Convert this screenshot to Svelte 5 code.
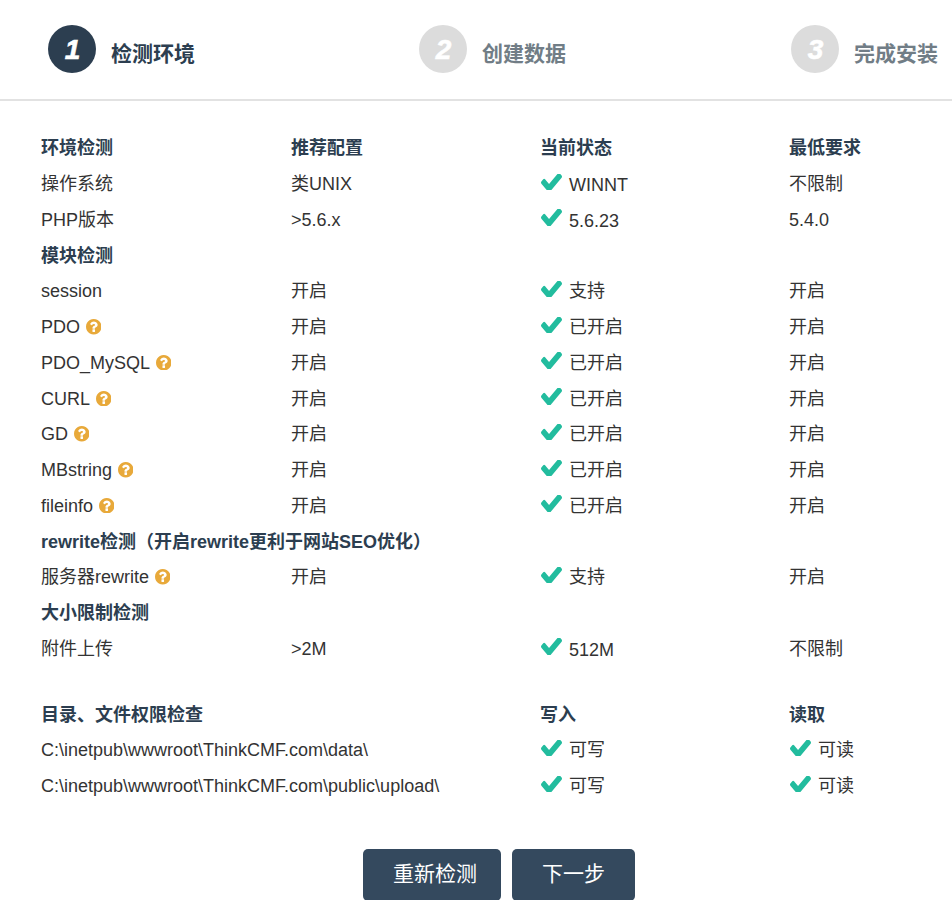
<script>
  const check = "M1671 566q0 40-28 68l-724 724-136 136q-28 28-68 28t-68-28l-136-136-362-362q-28-28-28-68t28-68l136-136q28-28 68-28t68 28l294 295 656-657q28-28 68-28t68 28l136 136q28 28 28 68z";
  const help = "M1024 1376v-192q0-14-9-23t-23-9h-192q-14 0-23 9t-9 23v192q0 14 9 23t23 9h192q14 0 23-9t9-23zm256-672q0-88-55.5-163t-138.5-116-170-41q-243 0-371 213-15 24 8 42l132 100q7 6 19 6 16 0 25-12 53-68 86-92 34-24 86-24 48 0 85.5 26t37.5 59q0 38-20 61t-68 45q-63 28-115.5 86.5t-52.5 125.5v36q0 14 9 23t23 9h192q14 0 23-9t9-23q0-19 21.5-49.5t54.5-49.5q32-18 49-28.5t46-35 44.5-48 28-60.5 12.5-81zm384 192q0 209-103 385.5t-279.5 279.5-385.5 103-385.5-103-279.5-279.5-103-385.5 103-385.5 279.5-279.5 385.5-103 385.5 103 279.5 279.5 103 385.5z";
  const steps = [
    { n: 1, label: "检测环境", active: true },
    { n: 2, label: "创建数据", active: false },
    { n: 3, label: "完成安装", active: false },
  ];
  const mods = [
    ["session", false, "支持"],
    ["PDO", true, "已开启"],
    ["PDO_MySQL", true, "已开启"],
    ["CURL", true, "已开启"],
    ["GD", true, "已开启"],
    ["MBstring", true, "已开启"],
    ["fileinfo", true, "已开启"],
  ];
  const dirs = [
    "C:\\inetpub\\wwwroot\\ThinkCMF.com\\data\\",
    "C:\\inetpub\\wwwroot\\ThinkCMF.com\\public\\upload\\",
  ];
</script>

{#snippet ok(text, low = false)}
  <svg class="check" viewBox="121 398 1550 1020" preserveAspectRatio="none" aria-hidden="true"><path d={check} /></svg><span class:low>{text}</span>
{/snippet}
{#snippet q()}
  <svg class="help" viewBox="128 128 1536 1536" aria-hidden="true"><path d={help} /></svg>
{/snippet}
{#snippet cols()}
  <colgroup><col class="c1" /><col class="c2" /><col class="c2" /><col class="c2" /></colgroup>
{/snippet}

<div class="page">
  <div class="inner">
    <header class="steps">
      {#each steps as s}
        <div class="step" class:active={s.active}>
          <span class="num">{s.n}</span>
          <span class="label">{s.label}</span>
        </div>
      {/each}
    </header>

    <table class="first">
      {@render cols()}
      <tbody>
        <tr class="head"><td>环境检测</td><td>推荐配置</td><td>当前状态</td><td>最低要求</td></tr>
        <tr><td>操作系统</td><td>类UNIX</td><td>{@render ok("WINNT", true)}</td><td>不限制</td></tr>
        <tr><td>PHP版本</td><td>&gt;5.6.x</td><td>{@render ok("5.6.23", true)}</td><td>5.4.0</td></tr>
        <tr class="head"><td colspan="4">模块检测</td></tr>
        {#each mods as m}
          <tr>
            <td>{m[0]}{#if m[1]}{@render q()}{/if}</td>
            <td>开启</td>
            <td>{@render ok(m[2])}</td>
            <td>开启</td>
          </tr>
        {/each}
        <tr class="head"><td colspan="4">rewrite检测（开启rewrite更利于网站SEO优化）</td></tr>
        <tr><td>服务器rewrite{@render q()}</td><td>开启</td><td>{@render ok("支持")}</td><td>开启</td></tr>
        <tr class="head"><td colspan="4">大小限制检测</td></tr>
        <tr><td>附件上传</td><td>&gt;2M</td><td>{@render ok("512M", true)}</td><td>不限制</td></tr>
      </tbody>
    </table>

    <table class="second">
      {@render cols()}
      <tbody>
        <tr class="head"><td colspan="2">目录、文件权限检查</td><td>写入</td><td>读取</td></tr>
        {#each dirs as d}
          <tr>
            <td colspan="2">{d}</td>
            <td>{@render ok("可写")}</td>
            <td>{@render ok("可读")}</td>
          </tr>
        {/each}
      </tbody>
    </table>

    <div class="actions">
      <button class="btn recheck">重新检测</button>
      <button class="btn next">下一步</button>
    </div>
  </div>
</div>

<style>
  :global(body) {
    margin: 0;
    background: #fff;
  }
  .page {
    width: 952px;
    height: 900px;
    overflow: hidden;
    font-family: "Liberation Sans", "Noto Sans CJK SC", sans-serif;
    font-size: 18px;
    color: #333;
  }
  .inner {
    width: 998px;
  }
  .steps {
    display: grid;
    grid-template-columns: 371px 372px 1fr;
    box-sizing: border-box;
    width: 952px;
    height: 101px;
    padding: 25px 0 0 48px;
    border-bottom: 2px solid #e2e2e2;
  }
  .step {
    display: flex;
    align-items: flex-start;
    gap: 15px;
    color: #717d86;
  }
  .step.active {
    color: #2c3e50;
  }
  .num {
    flex: none;
    box-sizing: border-box;
    width: 48px;
    height: 48px;
    padding: 2px 0 0 1px;
    border-radius: 50%;
    background: #dcdcdc;
    color: #fff;
    font-size: 28px;
    font-weight: bold;
    font-style: italic;
    line-height: 46px;
    text-align: center;
    -webkit-text-stroke: 0.6px #fff;
  }
  .active .num {
    background: #2c3e50;
  }
  .label {
    font-size: 21px;
    font-weight: bold;
    line-height: 57px;
    white-space: nowrap;
  }
  table {
    border-collapse: collapse;
    table-layout: fixed;
    width: 997px;
    margin-left: 33px;
  }
  .c1 {
    width: 250px;
  }
  .c2 {
    width: 249px;
  }
  .first {
    margin-top: 30px;
  }
  .second {
    margin-top: 30px;
  }
  td {
    box-sizing: border-box;
    height: 35.75px;
    padding: 0 8px;
    line-height: 25px;
    vertical-align: middle;
    white-space: nowrap;
  }
  .head td {
    font-weight: bold;
    color: #2c3e50;
  }
  .low {
    position: relative;
    top: 1px;
  }
  .check {
    width: 21px;
    height: 16.5px;
    margin: 0 7px 0 1px;
    vertical-align: 0;
    fill: #22bc9e;
  }
  .help {
    width: 15.5px;
    height: 15.5px;
    margin-left: 5.5px;
    vertical-align: -1.5px;
    fill: #e8a93a;
  }
  .actions {
    display: flex;
    justify-content: center;
    gap: 11px;
    margin-top: 44px;
  }
  .btn {
    box-sizing: border-box;
    height: 52px;
    padding: 0 0 5px;
    border: 0;
    border-radius: 5px;
    background: #34495e;
    color: #fff;
    font: inherit;
    font-size: 21px;
  }
  .recheck {
    width: 138px;
    padding-left: 6px;
  }
  .next {
    width: 123px;
  }
</style>
